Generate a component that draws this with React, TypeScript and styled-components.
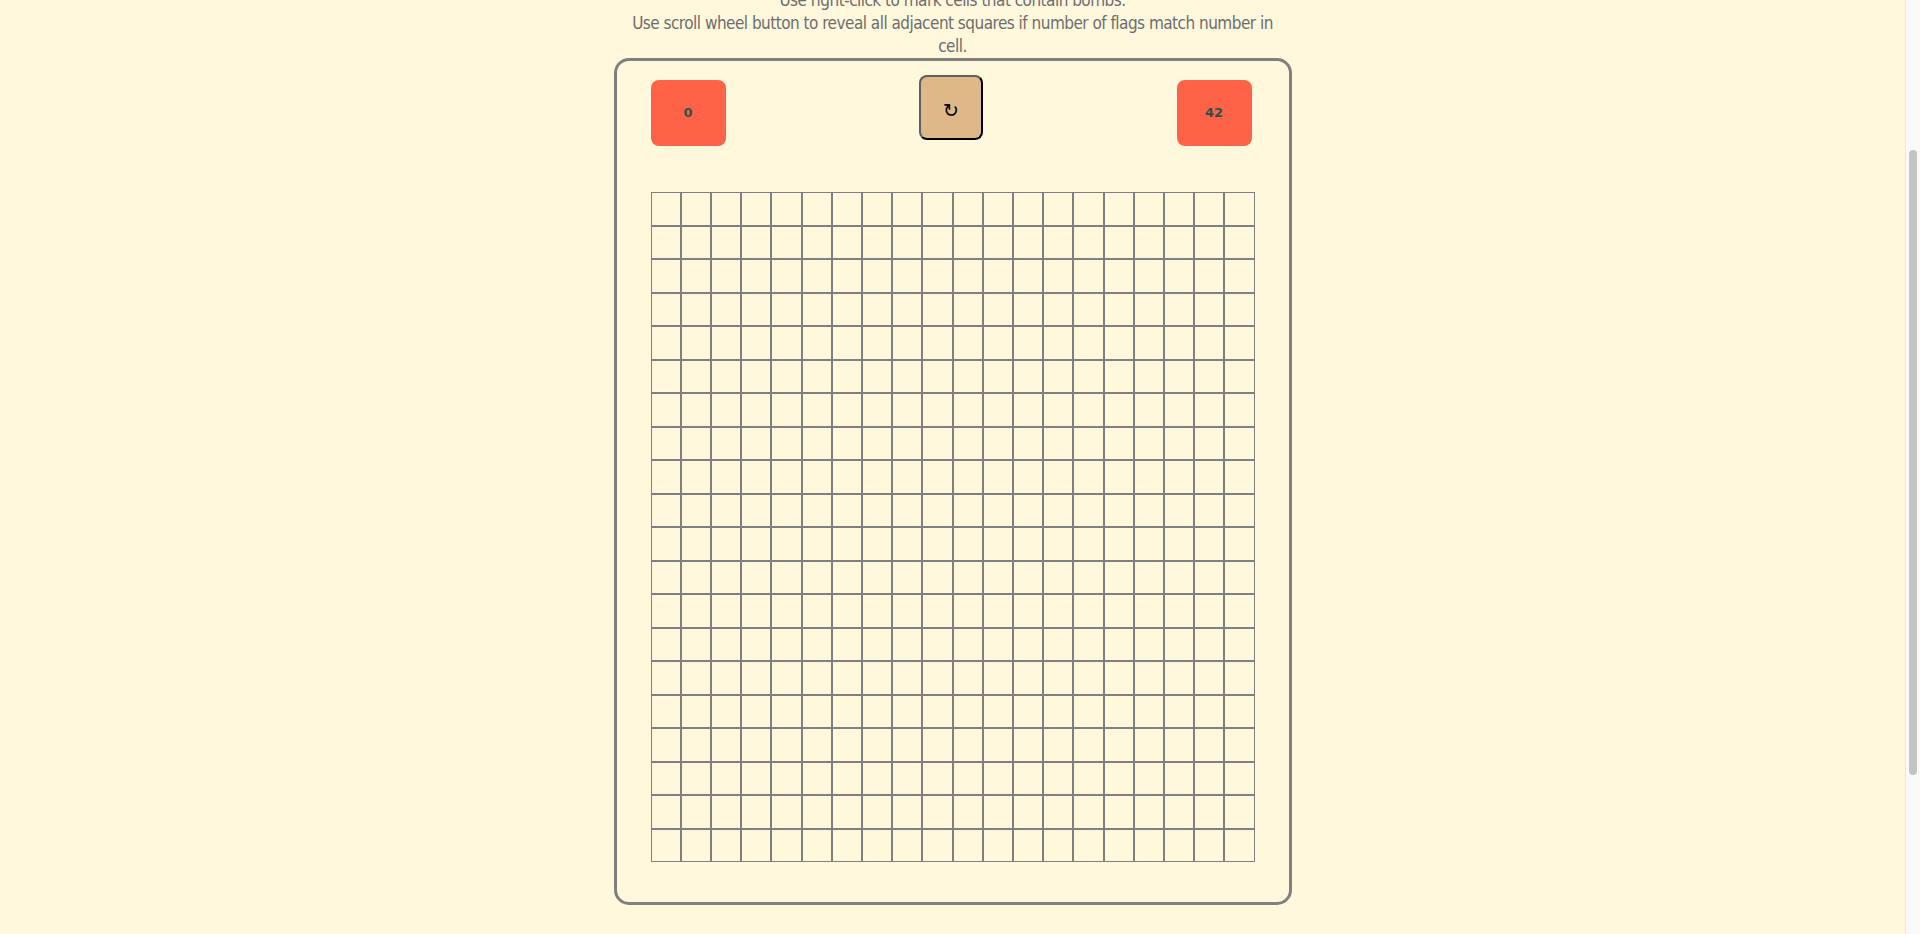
import React, { useLayoutEffect, useRef } from "react";
import styled, { createGlobalStyle } from "styled-components";

const GlobalStyle = createGlobalStyle`
  html {
    scrollbar-width: none;
  }
  html, body {
    margin: 0;
    padding: 0;
    background: #fff8dc;
  }
  body {
    font-family: "Liberation Sans Narrow", "DejaVu Sans Condensed", "Liberation Sans", sans-serif;
  }
`;

const Page = styled.main`
  display: flex;
  flex-direction: column;
  align-items: center;
  padding: 0 15px 267px 0;
`;

const Title = styled.h1`
  margin: 0;
  padding: 64px 0 70px;
  font-size: 48px;
  line-height: 56px;
  font-weight: 700;
  color: #555;
`;

const Instructions = styled.div`
  width: 660px;
  padding-top: 1px;
  text-align: center;
  font-size: 17px;
  line-height: 23px;
  letter-spacing: -0.52px;
  color: #6e6e6e;
`;

const Line = styled.p`
  margin: 0;
`;

const Board = styled.section`
  box-sizing: border-box;
  width: 678px;
  padding: 14px 34px 40px;
  border: 3px solid #808080;
  border-radius: 15px;
`;

const Header = styled.div`
  display: flex;
  justify-content: space-between;
  align-items: flex-start;
  padding-right: 3px;
`;

const Counter = styled.div`
  display: flex;
  align-items: center;
  justify-content: center;
  width: 75px;
  height: 66px;
  margin-top: 5px;
  padding-bottom: 2px;
  box-sizing: border-box;
  background: #ff6347;
  border-radius: 8px;
  font-family: "DejaVu Sans", sans-serif;
  font-weight: 700;
  font-size: 13px;
  color: #2f4f4f;
`;

const ResetButton = styled.button`
  display: flex;
  align-items: center;
  justify-content: center;
  box-sizing: border-box;
  width: 64px;
  height: 65px;
  padding: 5px 0 0;
  background: #deb887;
  border: 2px solid;
  border-color: #5f5f5f #000 #000 #5f5f5f;
  border-radius: 8px;
  font-family: "DejaVu Sans", sans-serif;
  font-size: 19px;
  color: #000;
  cursor: pointer;
`;

const Grid = styled.div`
  display: grid;
  grid-template-columns: repeat(20, 1fr);
  grid-template-rows: repeat(20, 1fr);
  width: 604px;
  height: 670px;
  margin-top: 46px;
`;

const Cell = styled.div`
  box-sizing: border-box;
  border: 1px solid #808080;
  background: transparent;
`;

const ScrollTrack = styled.div`
  position: fixed;
  top: 0;
  right: 0;
  box-sizing: border-box;
  width: 15px;
  height: 100vh;
  background: #f9f9f9;
  border-left: 1px solid #e6e6e6;
`;

const ScrollThumb = styled.div`
  position: absolute;
  top: 150px;
  left: 3px;
  width: 8px;
  height: 625px;
  border-radius: 4px;
  background: #c4c4c4;
`;

const ROWS = 20;
const COLS = 20;

export default function App() {
  const boardRef = useRef<HTMLElement>(null);

  useLayoutEffect(() => {
    const el = boardRef.current;
    if (el) {
      const top = el.getBoundingClientRect().top + window.scrollY;
      window.scrollTo(0, top - 58);
    }
  }, []);

  const cells = [];
  for (let r = 0; r < ROWS; r++) {
    for (let c = 0; c < COLS; c++) {
      cells.push(<Cell key={`${r}-${c}`} />);
    }
  }

  return (
    <>
      <GlobalStyle />
      <Page>
        <Title>Minesweeper</Title>
        <Instructions>
          <Line>Use left-click to reveal cells.</Line>
          <Line>Use right-click to mark cells that contain bombs.</Line>
          <Line>
            Use scroll wheel button to reveal all adjacent squares if number of flags match number in cell.
          </Line>
        </Instructions>
        <Board ref={boardRef}>
          <Header>
            <Counter>0</Counter>
            <ResetButton>↻</ResetButton>
            <Counter>42</Counter>
          </Header>
          <Grid>{cells}</Grid>
        </Board>
      </Page>
      <ScrollTrack aria-hidden="true">
        <ScrollThumb />
      </ScrollTrack>
    </>
  );
}
